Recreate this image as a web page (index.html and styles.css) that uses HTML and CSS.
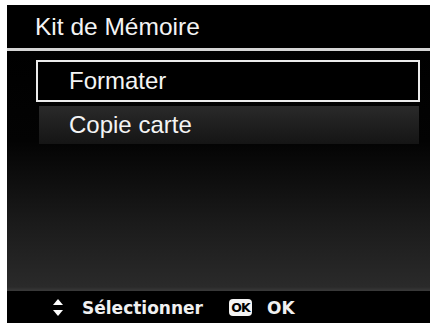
FILE: index.html
```html
<!DOCTYPE html>
<html lang="fr">
<head>
<meta charset="utf-8">
<title>Kit de Mémoire</title>
<link rel="stylesheet" href="styles.css">
</head>
<body>
<div class="screen">
  <header class="header"><h1 class="title">Kit de Mémoire</h1></header>
  <div class="sep"></div>
  <main class="content">
    <ul class="menu">
      <li class="item selected">Formater</li>
      <li class="item">Copie carte</li>
    </ul>
  </main>
  <footer class="footer">
    <svg class="arrows" width="10" height="17" viewBox="0 0 10 17">
      <polygon points="5,0 10,6 0,6" fill="#fff"/>
      <polygon points="0,11 10,11 5,17" fill="#fff"/>
    </svg>
    <span class="hint">Sélectionner</span>
    <span class="okbadge">OK</span>
    <span class="hint ok">OK</span>
  </footer>
</div>
</body>
</html>
```
FILE: styles.css
```css
html, body { margin: 0; padding: 0; background: #fff; }
body { overflow: hidden; }
.screen {
  margin: 5px 0 0 7px;
  width: 423px;
  height: 318px;
  background: #000;
  display: flex;
  flex-direction: column;
  font-family: "Liberation Sans", Arial, sans-serif;
  color: #fff;
}
.header {
  height: 43px;
  display: flex;
  align-items: center;
  padding-left: 28px;
  box-sizing: border-box;
}
.title {
  margin: 0;
  font-size: 24.5px;
  font-weight: normal;
  line-height: 1;
  padding-top: 1px;
  color: #f4f4f4;
}
.sep { height: 3px; background: #d4d4d4; }
.content {
  height: 240px;
  box-sizing: border-box;
  padding-top: 9px;
  background: linear-gradient(to bottom, #000 0px, #030303 90px, #1a1a1a 170px, #2a2a2a 236px, #3a3a3a 240px);
}
.menu {
  list-style: none;
  margin: 0;
  padding: 0 11px 0 29px;
  display: flex;
  flex-direction: column;
  gap: 4px;
}
.item {
  height: 38px;
  display: flex;
  align-items: center;
  padding-left: 30px;
  font-size: 24px;
  color: #f4f4f4;
  margin: 0 0 0 3px;
  background: linear-gradient(to bottom, #2a2a2a, #1f1f1f 50%, #151515);
}
.item.selected {
  height: 42px;
  box-sizing: border-box;
  border: 2px solid #ececec;
  background: #000;
  margin: 0 -1px 0 0;
  padding-left: 31px;
}
.footer {
  flex: 1;
  display: flex;
  align-items: center;
  padding-left: 46px;
  padding-top: 1px;
  background: #000;
}
.arrows { display: block; margin-right: 19px; }
.hint {
  font-family: "DejaVu Sans", Verdana, sans-serif;
  font-weight: bold;
  font-size: 17px;
  color: #f0f0f0;
}
.hint.ok { font-weight: 600; }
.okbadge {
  margin: 0 15px 0 26px;
  width: 23px;
  height: 17px;
  border-radius: 4px;
  background: #f4f4f4;
  color: #000;
  font-family: "DejaVu Sans", Verdana, sans-serif;
  font-weight: bold;
  font-size: 12.5px;
  letter-spacing: -1px;
  display: flex;
  align-items: center;
  justify-content: center;
}
```
